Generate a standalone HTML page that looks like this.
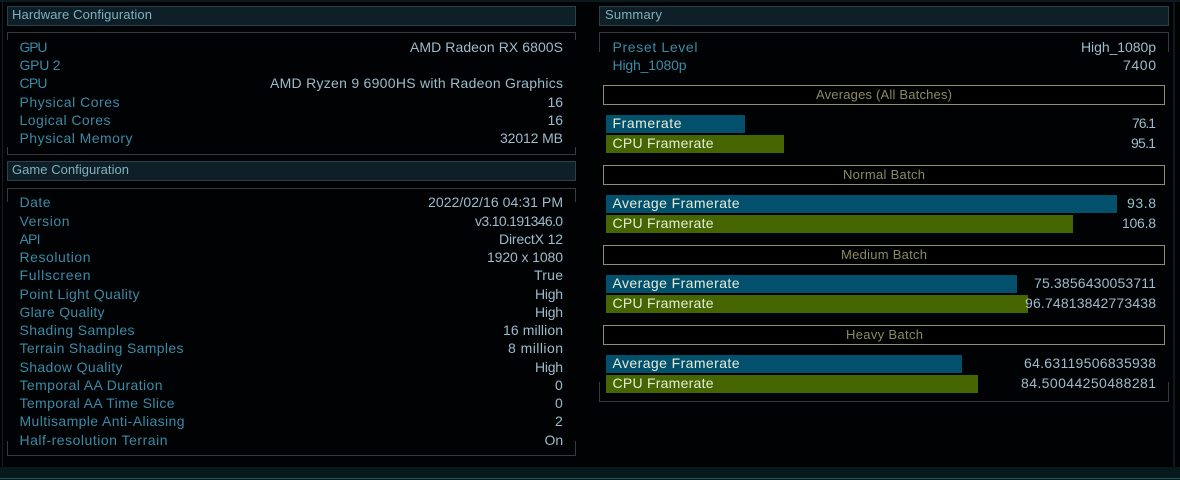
<!DOCTYPE html>
<html><head><meta charset="utf-8"><style>
html,body{margin:0;padding:0;background:#000;width:1180px;height:480px;overflow:hidden}
svg{display:block}
text{font-family:"Liberation Sans",sans-serif;font-size:14px;white-space:pre}
.l{fill:#3b8ba6}.v{fill:#9dbccb}.h{fill:#7fb0bd;font-size:13px}.t{fill:#8c8a62;font-size:13px}.w{fill:#e6ecd8}
</style></head><body>
<svg width="1180" height="480" viewBox="0 0 1180 480" xmlns="http://www.w3.org/2000/svg">
<rect width="1180" height="480" fill="#000204"/>
<rect width="1180" height="2" fill="#0a1a20"/>
<rect x="2" y="0" width="1" height="467" fill="#141c20"/>
<rect x="1173" y="0" width="2" height="467" fill="#0c1a20"/>
<rect x="0" y="467" width="1180" height="13" fill="#08191e"/>
<rect x="0" y="478" width="1180" height="1" fill="#1d5a60"/>

<g fill="#0e1f28" stroke="#28424c">
<rect x="7.5" y="6.5" width="568" height="19"/>
<rect x="7.5" y="161.5" width="568" height="19"/>
<rect x="599.5" y="6.5" width="569" height="19"/>
</g>
<g fill="none" stroke="#333b40">
<path d="M7.5 40V32.5H575.5V40M7.5 147V154.5H575.5V147"/>
<path d="M7.5 202V188.5H575.5V202M7.5 441V455.5H575.5V441"/>
<path d="M599.5 52V32.5H1168.5V52M599.5 382V401.5H1168.5V382"/>
</g>

<text class="h" x="12" y="19" textLength="140" lengthAdjust="spacing">Hardware Configuration</text>
<text class="h" x="12" y="174" textLength="117" lengthAdjust="spacing">Game Configuration</text>
<text class="h" x="605" y="19" textLength="57" lengthAdjust="spacing">Summary</text>

<text class="l" x="19.5" y="52" textLength="28" lengthAdjust="spacing">GPU</text>
<text class="l" x="19.5" y="70" textLength="41" lengthAdjust="spacing">GPU 2</text>
<text class="l" x="19.5" y="88" textLength="28" lengthAdjust="spacing">CPU</text>
<text class="l" x="19.5" y="107" textLength="100" lengthAdjust="spacing">Physical Cores</text>
<text class="l" x="19.5" y="125" textLength="91" lengthAdjust="spacing">Logical Cores</text>
<text class="l" x="19.5" y="143" textLength="113" lengthAdjust="spacing">Physical Memory</text>
<text class="l" x="19.5" y="207" textLength="31" lengthAdjust="spacing">Date</text>
<text class="l" x="19.5" y="226" textLength="50" lengthAdjust="spacing">Version</text>
<text class="l" x="19.5" y="244" textLength="21" lengthAdjust="spacing">API</text>
<text class="l" x="19.5" y="262" textLength="71" lengthAdjust="spacing">Resolution</text>
<text class="l" x="19.5" y="280" textLength="71" lengthAdjust="spacing">Fullscreen</text>
<text class="l" x="19.5" y="299" textLength="120" lengthAdjust="spacing">Point Light Quality</text>
<text class="l" x="19.5" y="317" textLength="85" lengthAdjust="spacing">Glare Quality</text>
<text class="l" x="19.5" y="335" textLength="115" lengthAdjust="spacing">Shading Samples</text>
<text class="l" x="19.5" y="353" textLength="164" lengthAdjust="spacing">Terrain Shading Samples</text>
<text class="l" x="19.5" y="372" textLength="103" lengthAdjust="spacing">Shadow Quality</text>
<text class="l" x="19.5" y="390" textLength="143" lengthAdjust="spacing">Temporal AA Duration</text>
<text class="l" x="19.5" y="408" textLength="155" lengthAdjust="spacing">Temporal AA Time Slice</text>
<text class="l" x="19.5" y="426" textLength="165" lengthAdjust="spacing">Multisample Anti-Aliasing</text>
<text class="l" x="19.5" y="445" textLength="148" lengthAdjust="spacing">Half-resolution Terrain</text>
<text class="l" x="612.5" y="52" textLength="85" lengthAdjust="spacing">Preset Level</text>
<text class="l" x="612.5" y="70" textLength="74" lengthAdjust="spacing">High_1080p</text>

<text class="v" x="410" y="52" textLength="153" lengthAdjust="spacing">AMD Radeon RX 6800S</text>
<text class="v" x="270" y="88" textLength="293" lengthAdjust="spacing">AMD Ryzen 9 6900HS with Radeon Graphics</text>
<text class="v" x="547.5" y="107">16</text>
<text class="v" x="547.5" y="125">16</text>
<text class="v" x="500" y="143" textLength="63" lengthAdjust="spacing">32012 MB</text>
<text class="v" x="428" y="207" textLength="135" lengthAdjust="spacing">2022/02/16 04:31 PM</text>
<text class="v" x="475" y="226" textLength="88" lengthAdjust="spacing">v3.10.191346.0</text>
<text class="v" x="499" y="244" textLength="64" lengthAdjust="spacing">DirectX 12</text>
<text class="v" x="487" y="262" textLength="76" lengthAdjust="spacing">1920 x 1080</text>
<text class="v" x="534" y="280" textLength="29" lengthAdjust="spacing">True</text>
<text class="v" x="535" y="299" textLength="28" lengthAdjust="spacing">High</text>
<text class="v" x="535" y="317" textLength="28" lengthAdjust="spacing">High</text>
<text class="v" x="503" y="335" textLength="60" lengthAdjust="spacing">16 million</text>
<text class="v" x="508" y="353" textLength="55" lengthAdjust="spacing">8 million</text>
<text class="v" x="535" y="372" textLength="28" lengthAdjust="spacing">High</text>
<text class="v" x="555" y="390">0</text>
<text class="v" x="555" y="408">0</text>
<text class="v" x="555" y="426">2</text>
<text class="v" x="544.5" y="445">On</text>
<text class="v" x="1081" y="52" textLength="75" lengthAdjust="spacing">High_1080p</text>
<text class="v" x="1123" y="70" textLength="33" lengthAdjust="spacing">7400</text>

<g fill="#000" stroke="#8f8d72">
<rect x="603.5" y="85.5" width="561" height="19"/>
<rect x="603.5" y="165.5" width="561" height="19"/>
<rect x="603.5" y="245.5" width="561" height="19"/>
<rect x="603.5" y="325.5" width="561" height="19"/>
</g>
<text class="t" x="816" y="99" textLength="136" lengthAdjust="spacing">Averages (All Batches)</text>
<text class="t" x="843" y="179" textLength="82" lengthAdjust="spacing">Normal Batch</text>
<text class="t" x="841" y="259" textLength="86" lengthAdjust="spacing">Medium Batch</text>
<text class="t" x="846" y="339" textLength="77" lengthAdjust="spacing">Heavy Batch</text>

<g fill="#02506c">
<rect x="606" y="115" width="139" height="18"/>
<rect x="606" y="195" width="511" height="18"/>
<rect x="606" y="275" width="411" height="18"/>
<rect x="606" y="355" width="356" height="18"/>
</g>
<g fill="#466601">
<rect x="606" y="135" width="178" height="18"/>
<rect x="606" y="215" width="467" height="18"/>
<rect x="606" y="295" width="422" height="18"/>
<rect x="606" y="375" width="372" height="18"/>
</g>
<text class="w" x="612.5" y="128" textLength="69" lengthAdjust="spacing">Framerate</text>
<text class="w" x="612.5" y="148" textLength="101" lengthAdjust="spacing">CPU Framerate</text>
<text class="w" x="612.5" y="208" textLength="127" lengthAdjust="spacing">Average Framerate</text>
<text class="w" x="612.5" y="228" textLength="101" lengthAdjust="spacing">CPU Framerate</text>
<text class="w" x="612.5" y="288" textLength="127" lengthAdjust="spacing">Average Framerate</text>
<text class="w" x="612.5" y="308" textLength="101" lengthAdjust="spacing">CPU Framerate</text>
<text class="w" x="612.5" y="368" textLength="127" lengthAdjust="spacing">Average Framerate</text>
<text class="w" x="612.5" y="388" textLength="101" lengthAdjust="spacing">CPU Framerate</text>

<text class="v" x="1132" y="128" textLength="24" lengthAdjust="spacing">76.1</text>
<text class="v" x="1131" y="148" textLength="25" lengthAdjust="spacing">95.1</text>
<text class="v" x="1127" y="208" textLength="29" lengthAdjust="spacing">93.8</text>
<text class="v" x="1122" y="228" textLength="34" lengthAdjust="spacing">106.8</text>
<text class="v" x="1034" y="288" textLength="122" lengthAdjust="spacing">75.3856430053711</text>
<text class="v" x="1025" y="308" textLength="131" lengthAdjust="spacing">96.74813842773438</text>
<text class="v" x="1024" y="368" textLength="132" lengthAdjust="spacing">64.63119506835938</text>
<text class="v" x="1021" y="388" textLength="135" lengthAdjust="spacing">84.50044250488281</text>
</svg>
</body></html>
